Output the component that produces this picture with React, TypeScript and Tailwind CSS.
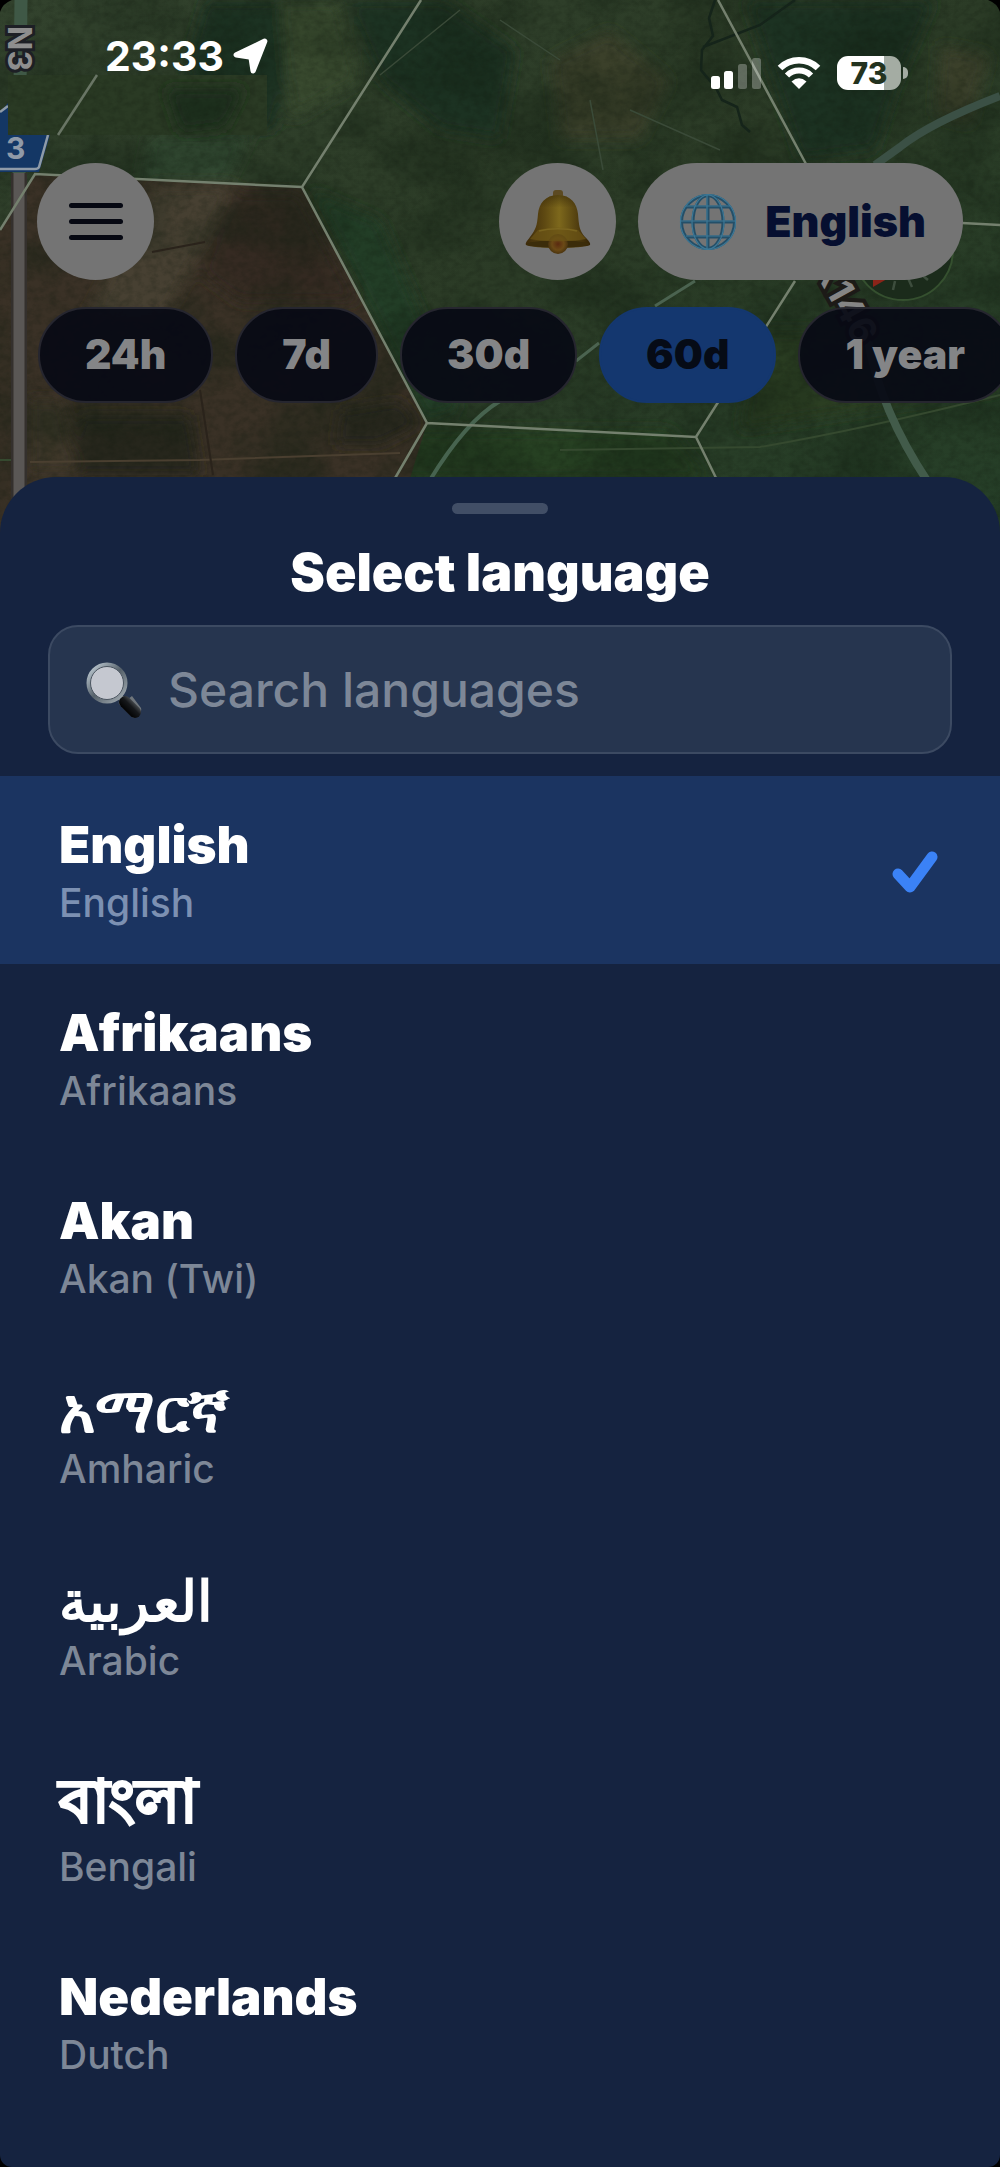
import { useState } from "react";

type Language = { code: string; native: string; name: string; style: string };

const languages: Language[] = [
  { code: "en", native: "English", name: "English", style: "text-[51px] leading-[58px]" },
  { code: "af", native: "Afrikaans", name: "Afrikaans", style: "text-[51px] leading-[58px]" },
  { code: "ak", native: "Akan", name: "Akan (Twi)", style: "text-[51px] leading-[58px]" },
  { code: "am", native: "አማርኛ", name: "Amharic", style: "text-[62px] leading-[60px]" },
  { code: "ar", native: "العربية", name: "Arabic", style: "text-[56px] leading-[62px]" },
  { code: "bn", native: "বাংলা", name: "Bengali", style: "text-[60px] leading-[76px] [-webkit-text-stroke:2px_white]" },
  { code: "nl", native: "Nederlands", name: "Dutch", style: "text-[51px] leading-[58px]" },
];

const ranges = ["24h", "7d", "30d", "60d", "1 year"];

function MapBackdrop() {
  return (
    <svg
      className="absolute inset-x-0 top-0 h-[560px] w-full"
      viewBox="0 0 1000 560"
      preserveAspectRatio="xMidYMin slice"
      aria-hidden="true"
    >
      <defs>
        <filter id="soft" x="-20%" y="-20%" width="140%" height="140%">
          <feGaussianBlur stdDeviation="7" />
        </filter>
        <filter id="grain" x="0" y="0" width="100%" height="100%" colorInterpolationFilters="sRGB">
          <feTurbulence type="fractalNoise" baseFrequency="0.12 0.16" numOctaves="4" seed="4" />
          <feColorMatrix values="0 0 0 0 0.06  0 0 0 0 0.09  0 0 0 0 0.05  2.4 0 0 0 -0.9" />
        </filter>
        <filter id="patches" x="0" y="0" width="100%" height="100%" colorInterpolationFilters="sRGB">
          <feTurbulence type="fractalNoise" baseFrequency="0.012 0.016" numOctaves="4" seed="9" />
          <feColorMatrix values="0 0 0 0 0.07  0 0 0 0 0.12  0 0 0 0 0.07  3 0 0 0 -1.2" />
        </filter>
        <linearGradient id="land" x1="0" y1="0" x2="1" y2="1">
          <stop offset="0" stopColor="#32422d" />
          <stop offset="0.5" stopColor="#2b3b26" />
          <stop offset="1" stopColor="#253f28" />
        </linearGradient>
      </defs>
      <rect width="1000" height="560" fill="url(#land)" />
      <g filter="url(#soft)">
        <path d="M205 0h75l14 50-20 80-60 0-30-60z" fill="#1b3020" />
        <path d="M345 0h100l70 50-15 90-60-10-60-50z" fill="#1f3321" />
        <path d="M280 0h60l20 80-70 40z" fill="#384a2e" />
        <path d="M550 60l60-30 60 50-30 60-80 0z" fill="#3a412c" />
        <path d="M745 0h190l-40 90-20 60-75 10z" fill="#1b3320" />
        <path d="M940 45l50 10-20 70-35-10z" fill="#3b3f2b" />
        <path d="M150 136h100l-25 50H140z" fill="#334a31" />
        <path d="M310 190l70 30 40 90 40 100-35 10z" fill="#213c26" />
        <path d="M400 430h270l40 50H400z" fill="#263f21" />
        <path d="M760 330h240v60l-260 40z" fill="#2a3e24" />
      </g>
      <path d="M35 174L302 187L427 423L385 560H0V230Z" fill="#3a3126" />
      <g filter="url(#soft)">
        <path d="M155 185h80l-30 60-40 70-80 5z" fill="#474030" />
        <path d="M235 192h64l60 110-120 0-40-30z" fill="#362b23" />
        <path d="M80 415h110l10 60H70z" fill="#25251c" />
        <path d="M340 410l60-10 20 25-40 20-45 0z" fill="#25281d" />
        <path d="M28 400h35l15 75H28z" fill="#40372a" />
      </g>
      <rect width="1000" height="560" filter="url(#patches)" opacity="0.35" />
      <rect width="1000" height="560" filter="url(#grain)" opacity="0.2" />

      <path d="M30 462L200 460L400 453" fill="none" stroke="#4a3f30" strokeWidth="2" />
      <path d="M152 252L205 242M200 390L213 475" fill="none" stroke="#2a231b" strokeWidth="2" />
      <path d="M715 0L709 18L713 36L702 50L701 70L716 88L722 100L737 107L742 125L750 132M703 47L760 25L795 0" fill="none" stroke="#15241a" strokeWidth="2.5" />
      <path d="M380 75L460 10M500 20L560 60M590 100L603 170M630 110L720 150" fill="none" stroke="#3a4a38" strokeWidth="1.5" />
      <path d="M0 460H20M560 450L760 447Q860 430 1000 395" fill="none" stroke="#35492f" strokeWidth="2" />

      <path d="M21 0L19 175" stroke="#3f5846" strokeWidth="13" />
      <path d="M19 173V510" stroke="#34302d" strokeWidth="16" />
      <path d="M19 173V510" stroke="#5a5755" strokeWidth="11" />
      <path d="M875 165L900 147Q930 123 1000 96" fill="none" stroke="#3b5045" strokeWidth="8" />
      <path d="M655 306L695 281M576 361L599 343" fill="none" stroke="#4b6350" strokeWidth="3" />
      <path d="M430 480Q466 421 500 401" fill="none" stroke="#47634f" strokeWidth="4" />
      <path d="M868 340Q880 410 928 482" fill="none" stroke="#425b4a" strokeWidth="8" />

      <g fill="none" stroke="#74806e" strokeWidth="2.5">
        <path d="M421 0L302 187L427 423L696 437L795 281M0 230L35 174L302 187M427 423L394 480M696 437L718 482" />
        <path d="M718 0L806 164M962 223L1000 225" />
      </g>

      <text transform="translate(8 26) rotate(90)" fontFamily="Inter, sans-serif" fontWeight="700" fontSize="32" fill="#8e8e8e" stroke="#1d1f25" strokeWidth="6" paintOrder="stroke">N3</text>
      <path d="M-20 135L8 103V135H50L39 172H-20Z" fill="#143765" />
      <path d="M0 112L8 106M48 135L39 167Q38 169 35 169H0" fill="none" stroke="#8f9ba8" strokeWidth="2.5" />
      <text x="6" y="159" fontFamily="Inter, sans-serif" fontWeight="700" fontSize="30" fill="#909aa8">3</text>
      <rect x="8" y="75" width="259" height="60" fill="#2a3a24" />
      <g filter="url(#soft)">
        <path d="M165 88h80l-20 40-45 5z" fill="#1b2f1d" />
      </g>
      <rect x="8" y="75" width="259" height="60" filter="url(#grain)" opacity="0.2" />
      <path d="M97 75L58 135" stroke="#697565" strokeWidth="2.5" />

      <circle cx="903" cy="250" r="50" fill="#1b2b1b" stroke="#35502f" strokeWidth="2" />
      <path d="M873 274l14 5-14 8z" fill="#8a2419" />
      <path d="M895 281l-2 9M908 278l4 9M922 275l6 5" stroke="#3d4d3d" strokeWidth="2.5" />
      <text transform="translate(812 267) rotate(61)" fontFamily="Inter, sans-serif" fontWeight="700" fontSize="37" fill="#858585" stroke="#1c1a17" strokeWidth="8" paintOrder="stroke">K146</text>
      <path d="M0 0H12Q3 3 0 12ZM1000 0H988Q997 3 1000 12Z" fill="#000" />
    </svg>
  );
}

function StatusBar() {
  return (
    <div className="flex h-[163px] items-start justify-between pr-[92px] pl-[105px] text-white">
      <div className="flex items-center gap-2 pt-8">
        <span className="text-[41px] leading-[48px] font-bold">23:33</span>
        <svg width="38" height="38" viewBox="0 0 36 36" aria-label="Location in use">
          <path d="M31 4L4 17L18 19L20 32Z" fill="#fff" stroke="#fff" strokeWidth="5" strokeLinejoin="round" />
        </svg>
      </div>
      <div className="flex items-center gap-4 pt-14">
        <svg width="50" height="34" viewBox="0 0 50 34" aria-label="Signal: two bars of four">
          <rect x="0" y="20" width="9" height="13" rx="2.5" fill="#fff" />
          <rect x="13" y="15" width="9" height="18" rx="2.5" fill="#fff" />
          <rect x="27" y="8" width="9" height="25" rx="2.5" fill="#fff" fillOpacity="0.28" />
          <rect x="41" y="2" width="9" height="31" rx="2.5" fill="#fff" fillOpacity="0.28" />
        </svg>
        <svg width="44" height="34" viewBox="0 0 44 34" aria-label="Wi-Fi">
          <path d="M3 12A27 27 0 0 1 41 12" fill="none" stroke="#fff" strokeWidth="6.5" />
          <path d="M10 19.500A17 17 0 0 1 34 19.500" fill="none" stroke="#fff" strokeWidth="6" />
          <path d="M22 33L14.500 25.500Q22 19 29.500 25.500Z" fill="#fff" />
        </svg>
        <div className="flex items-center gap-[2px]">
          <div className="flex h-[34px] w-16 items-center justify-center rounded-[11px] bg-linear-to-r from-white from-74% to-[#a4aca3] to-74% text-[30px] leading-none font-extrabold text-[#23331f]">
            73
          </div>
          <div className="h-3 w-[5px] rounded-r-full bg-[#a4aca3]" />
        </div>
      </div>
    </div>
  );
}

function BellIcon() {
  return (
    <svg width="66" height="66" viewBox="0 0 66 66" aria-hidden="true">
      <defs>
        <linearGradient id="brass" x1="0" x2="1" y1="0" y2="0">
          <stop offset="0" stopColor="#3d2a0a" />
          <stop offset="0.3" stopColor="#5f4a12" />
          <stop offset="0.52" stopColor="#7d681c" />
          <stop offset="0.8" stopColor="#523f10" />
          <stop offset="1" stopColor="#332306" />
        </linearGradient>
        <linearGradient id="brassShade" x1="0" x2="0" y1="0" y2="1">
          <stop offset="0" stopColor="#2b1e06" stopOpacity="0.5" />
          <stop offset="0.3" stopColor="#2b1e06" stopOpacity="0" />
        </linearGradient>
        <radialGradient id="clapper">
          <stop offset="0" stopColor="#5a2a10" />
          <stop offset="0.6" stopColor="#6b4a16" />
          <stop offset="1" stopColor="#4a340f" />
        </radialGradient>
      </defs>
      <rect x="28" y="1" width="10" height="8" rx="3" fill="#5c4a22" />
      <path d="M33 6C20 6 14 15 13 25C12 37 11 40 5 48C2 52 0 54 1 56C8 60 58 60 65 56C66 54 63 51 60 48C54 41 54 36 53 25C52 15 46 6 33 6Z" fill="url(#brass)" />
      <path d="M33 6C20 6 14 15 13 25C12 37 11 40 5 48H60C54 41 54 36 53 25C52 15 46 6 33 6Z" fill="url(#brassShade)" />
      <path d="M1 55C9 50 57 50 65 55C58 60 8 60 1 55Z" fill="#3b2c0a" />
      <circle cx="33" cy="55" r="10" fill="url(#clapper)" />
      <path d="M13 41C24 38 42 38 53 41L61 50C46 53 20 53 5 50Z" fill="#6a5316" opacity="0.75" />
      <path d="M14 42C25 39 41 39 52 42" fill="none" stroke="#8c7829" strokeWidth="1.5" opacity="0.5" />
    </svg>
  );
}

function GlobeIcon() {
  return (
    <svg width="58" height="58" viewBox="0 0 58 58" fill="none" aria-hidden="true">
      <g stroke="#244f68" strokeWidth="3">
        <circle cx="29" cy="29" r="26.500" />
        <path d="M29 2V56M2 29H56M7 14H51M7 44H51" />
        <ellipse cx="29" cy="29" rx="15" ry="26.500" />
      </g>
      <g stroke="#3d7896" strokeWidth="1.200">
        <circle cx="29" cy="29" r="27.500" />
        <path d="M28 2V56M2 28H56M7 13H51M7 43H51" />
        <ellipse cx="29" cy="29" rx="16" ry="27" />
      </g>
    </svg>
  );
}

function SearchIcon() {
  return (
    <svg className="shrink-0" width="56" height="58" viewBox="0 0 56 58" aria-hidden="true">
      <defs>
        <linearGradient id="rim" x1="0" y1="0" x2="1" y2="1">
          <stop offset="0" stopColor="#c9d6de" />
          <stop offset="0.5" stopColor="#56616a" />
          <stop offset="1" stopColor="#a9b2b8" />
        </linearGradient>
        <linearGradient id="grip" x1="0" y1="1" x2="1" y2="0">
          <stop offset="0" stopColor="#000" />
          <stop offset="0.6" stopColor="#16181b" />
          <stop offset="1" stopColor="#4d5155" />
        </linearGradient>
      </defs>
      <path d="M33 35L38 40" stroke="#8c959c" strokeWidth="6" />
      <path d="M37 42L46 35L55 47Q56 50 53 53L50 56Q47 58 45 55L33 43Q32 40 35 38Z" fill="#70767c" />
      <path d="M39 41L49 51" stroke="url(#grip)" strokeWidth="12" strokeLinecap="round" />
      <circle cx="21" cy="22" r="18.500" fill="#c5c8d0" stroke="url(#rim)" strokeWidth="4" />
      <circle cx="21" cy="22" r="16.500" fill="none" stroke="#4b5560" strokeWidth="1" />
    </svg>
  );
}

function CheckIcon() {
  return (
    <svg width="46" height="43" viewBox="0 0 46 43" aria-hidden="true">
      <path d="M6 23L18 36L40 6" fill="none" stroke="#3b82f6" strokeWidth="11" strokeLinecap="round" strokeLinejoin="round" />
    </svg>
  );
}

export default function App() {
  const [selected, setSelected] = useState("en");
  const [range, setRange] = useState("60d");
  const [query, setQuery] = useState("");
  const shown = languages.filter((l) =>
    (l.native + " " + l.name).toLowerCase().includes(query.toLowerCase()),
  );

  return (
    <div className="relative flex min-h-screen flex-col overflow-hidden bg-black font-[Inter,'Noto_Sans',sans-serif]">
      <MapBackdrop />
      <header className="relative">
        <StatusBar />
        <div className="flex items-center justify-between px-[37px]">
          <button type="button" aria-label="Menu" className="flex size-[117px] flex-col items-center justify-center gap-[11px] rounded-full bg-[#747474]">
            <span className="h-[5px] w-[54px] rounded-full bg-[#060812]" />
            <span className="h-[5px] w-[54px] rounded-full bg-[#060812]" />
            <span className="h-[5px] w-[54px] rounded-full bg-[#060812]" />
          </button>
          <div className="flex items-center gap-[22px]">
            <button type="button" aria-label="Notifications" className="flex size-[117px] items-center justify-center rounded-full bg-[#747474]">
              <BellIcon />
            </button>
            <button type="button" className="flex h-[117px] items-center gap-7 rounded-full bg-[#747474] pr-[37px] pl-[41px] text-[43px] font-black text-[#060f30]">
              <GlobeIcon />
              English
            </button>
          </div>
        </div>
        <div className="flex gap-[22px] overflow-hidden pt-[27px] pb-[74px] pl-[38px]">
          {ranges.map((r) => (
            <button
              key={r}
              type="button"
              aria-pressed={r === range}
              onClick={() => setRange(r)}
              className={
                r === range
                  ? "h-24 shrink-0 rounded-full border-2 border-[#14376f] bg-[#14376f] px-[45px] text-[41px] font-black text-[#060b16]"
                  : "h-24 shrink-0 rounded-full border-2 border-[#26262f] bg-[#070a14]/93 px-[45px] text-[41px] font-black text-[#848587]"
              }
            >
              {r}
            </button>
          ))}
        </div>
      </header>

      <main className="relative flex-1 rounded-t-[56px] rounded-b-xl bg-[#152340] pt-[26px] text-white">
        <div className="mx-auto h-[11px] w-24 rounded-full bg-[#414e66]" />
        <h1 className="pt-7 text-center text-[52px] leading-[62px] font-black">Select language</h1>
        <div className="px-12 pt-[21px] pb-[22px]">
          <label className="flex h-[129px] items-center gap-[26px] rounded-[30px] border-2 border-[#3c4a62] bg-[#26354f] px-9">
            <SearchIcon />
            <input
              type="text"
              aria-label="Search languages"
              value={query}
              onChange={(e) => setQuery(e.target.value)}
              placeholder="Search languages"
              className="min-w-0 flex-1 bg-transparent text-[48px] font-medium outline-none placeholder:text-[#7d8797]"
            />
          </label>
        </div>
        <ul>
          {shown.map((l) => {
            const active = l.code === selected;
            return (
              <li key={l.code}>
                <button
                  type="button"
                  aria-pressed={active}
                  onClick={() => setSelected(l.code)}
                  className={
                    active
                      ? "flex w-full items-center justify-between bg-[#1b3461] pt-10 pr-[62px] pb-9 pl-[59px] text-left"
                      : "flex w-full items-center justify-between pt-10 pr-[62px] pb-9 pl-[59px] text-left"
                  }
                >
                  <span className="flex flex-col gap-1">
                    <span lang={l.code} className={`font-black ${l.style}`}>{l.native}</span>
                    <span className={active ? "text-[39px] leading-[50px] font-medium text-[#7c90b2]" : "text-[39px] leading-[50px] font-medium text-[#7d8797]"}>
                      {l.name}
                    </span>
                  </span>
                  {active && <CheckIcon />}
                </button>
              </li>
            );
          })}
        </ul>
      </main>
    </div>
  );
}
